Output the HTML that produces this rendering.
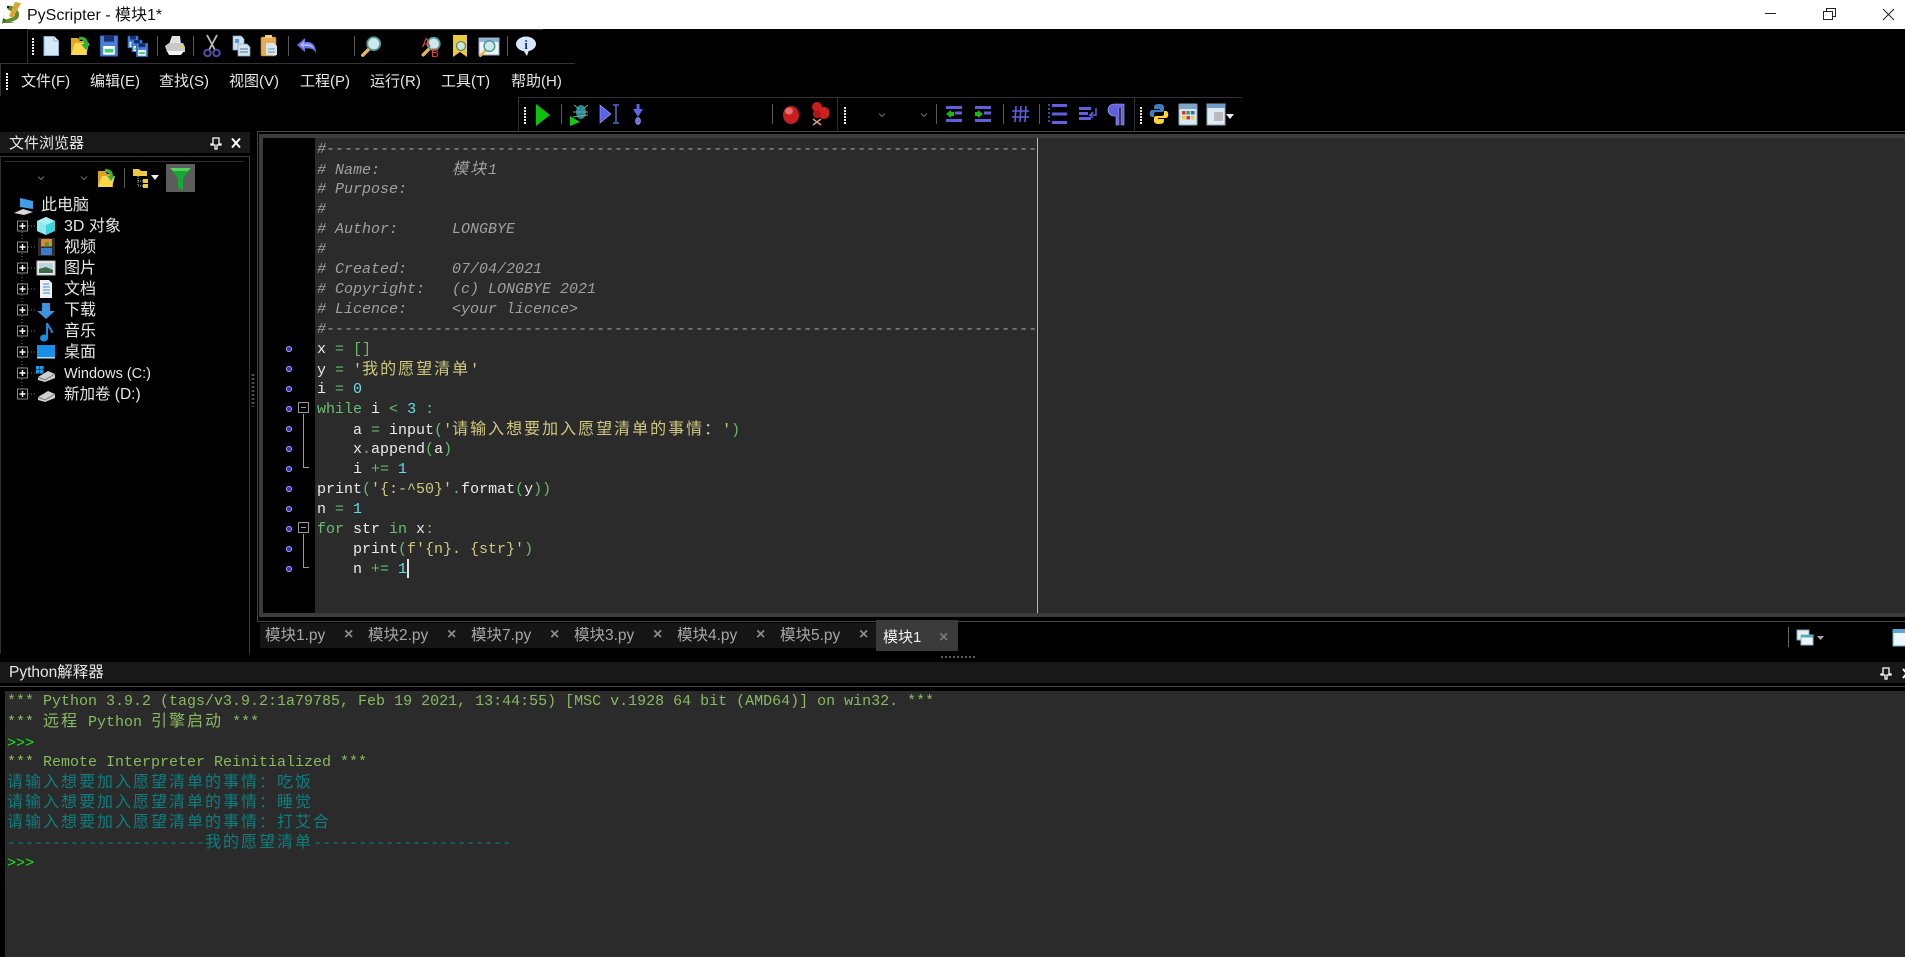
<!DOCTYPE html>
<html><head><meta charset="utf-8"><title>PyScripter</title>
<style>
html,body{margin:0;padding:0;background:#000;width:1905px;height:957px;overflow:hidden}
#r{position:relative;width:1905px;height:957px;background:#000;overflow:hidden;font-family:"Liberation Sans","Noto Sans CJK SC",sans-serif}
.a{position:absolute}
.t{position:absolute;white-space:pre;color:#e6e6e6;font-size:15px;line-height:20px;height:20px}
.tr{font-size:16px}
.l{position:absolute;left:317px;white-space:pre;font-family:"Liberation Mono","Noto Sans CJK SC",monospace;font-size:15px;line-height:20px;height:20px;color:#eaeaea}
.k{left:7px}
.c{font-size:16px;letter-spacing:2px}
.m{font-style:italic;color:#a0a0a0}
.g{color:#68bd72}.s{color:#d0c97f}.n{color:#62dfe6}.o{color:#66bb6a}
.f{color:#86bb5e}.p{color:#19e619}.e{color:#0b7f80}
.tb{color:#a6a6a6;font-size:15.5px;top:626px}
.x{color:#8a8a8a;font-size:16px;top:625px;font-weight:bold;font-family:"Liberation Sans",sans-serif}
</style></head><body><div id="r">

<div class="a" style="left:0;top:0;width:1905px;height:29px;background:#fff"></div>
<div class="t" style="left:27px;top:6px;color:#111;font-size:16px">PyScripter - 模块1*</div>

<!-- chrome lines -->
<div class="a" style="left:27px;top:29px;width:516px;height:1px;background:#333"></div>
<div class="a" style="left:27px;top:29px;width:1px;height:34px;background:#333"></div>
<div class="a" style="left:0;top:63px;width:575px;height:1px;background:#333"></div>
<div class="a" style="left:0;top:64px;width:1px;height:32px;background:#333"></div>
<div class="a" style="left:518px;top:97px;width:724px;height:1px;background:#333"></div>
<div class="a" style="left:518px;top:97px;width:1px;height:33px;background:#333"></div>
<div class="a" style="left:837px;top:97px;width:1px;height:33px;background:#333"></div>
<div class="a" style="left:1134px;top:97px;width:1px;height:33px;background:#333"></div>
<div class="a" style="left:257px;top:131px;width:1648px;height:1px;background:#4a4a4a"></div>

<!-- menu -->
<div class="t" style="left:21px;top:72px">文件(F)</div>
<div class="t" style="left:90px;top:72px">编辑(E)</div>
<div class="t" style="left:159px;top:72px">查找(S)</div>
<div class="t" style="left:229px;top:72px">视图(V)</div>
<div class="t" style="left:300px;top:72px">工程(P)</div>
<div class="t" style="left:370px;top:72px">运行(R)</div>
<div class="t" style="left:441px;top:72px">工具(T)</div>
<div class="t" style="left:511px;top:72px">帮助(H)</div>

<!-- file browser panel -->
<div class="a" style="left:0;top:132px;width:250px;height:21px;background:#181818"></div>
<div class="t" style="left:9px;top:134px">文件浏览器</div>
<div class="a" style="left:0;top:156px;width:250px;height:1px;background:#3a3a3a"></div>
<div class="a" style="left:0;top:156px;width:1px;height:498px;background:#2e2e2e"></div>
<div class="a" style="left:249px;top:156px;width:1px;height:498px;background:#3a3a3a"></div>
<div class="a" style="left:5px;top:161px;width:239px;height:1px;background:#2e2e2e"></div>
<div class="a" style="left:166px;top:164px;width:29px;height:28px;background:#5c5c5c"></div>

<div class="t tr" style="left:41px;top:196px">此电脑</div>
<div class="t tr" style="left:64px;top:217px">3D 对象</div>
<div class="t tr" style="left:64px;top:238px">视频</div>
<div class="t tr" style="left:64px;top:259px">图片</div>
<div class="t tr" style="left:64px;top:280px">文档</div>
<div class="t tr" style="left:64px;top:301px">下载</div>
<div class="t tr" style="left:64px;top:322px">音乐</div>
<div class="t tr" style="left:64px;top:343px">桌面</div>
<div class="t" style="left:64px;top:364px;font-size:14.5px">Windows (C:)</div>
<div class="t" style="left:64px;top:385px;font-size:15.5px">新加卷 (D:)</div>

<!-- editor frame -->
<div class="a" style="left:257px;top:132px;width:1648px;height:490px;background:#000;border-left:1px solid #454545;border-bottom:1px solid #454545;box-sizing:border-box"></div>
<div class="a" style="left:259px;top:134px;width:1646px;height:483px;background:#3c3c3c"></div>
<div class="a" style="left:263px;top:138px;width:1642px;height:475px;background:#2b2b2b"></div>
<div class="a" style="left:263px;top:138px;width:52px;height:475px;background:#000"></div>
<div class="a" style="left:1037px;top:138px;width:1px;height:475px;background:#b8b8b8"></div>
<div class="a" style="left:407px;top:559px;width:2px;height:19px;background:#e0e0e0"></div>

<!-- code -->
<div class="l m" style="top:140px">#-------------------------------------------------------------------------------</div>
<div class="l m" style="top:160px"># Name:        <span class="c">模块</span>1</div>
<div class="l m" style="top:180px"># Purpose:</div>
<div class="l m" style="top:200px">#</div>
<div class="l m" style="top:220px"># Author:      LONGBYE</div>
<div class="l m" style="top:240px">#</div>
<div class="l m" style="top:260px"># Created:     07/04/2021</div>
<div class="l m" style="top:280px"># Copyright:   (c) LONGBYE 2021</div>
<div class="l m" style="top:300px"># Licence:     &lt;your licence&gt;</div>
<div class="l m" style="top:320px">#-------------------------------------------------------------------------------</div>
<div class="l" style="top:340px">x <span class="o">= []</span></div>
<div class="l" style="top:360px">y <span class="o">=</span> <span class="s">'<span class="c">我的愿望清单</span>'</span></div>
<div class="l" style="top:380px">i <span class="o">=</span> <span class="n">0</span></div>
<div class="l" style="top:400px"><span class="g">while</span> i <span class="o">&lt;</span> <span class="n">3</span> <span class="o">:</span></div>
<div class="l" style="top:420px">    a <span class="o">=</span> input<span class="o">(</span><span class="s">'<span class="c">请输入想要加入愿望清单的事情：</span>'</span><span class="o">)</span></div>
<div class="l" style="top:440px">    x<span class="o">.</span>append<span class="o">(</span>a<span class="o">)</span></div>
<div class="l" style="top:460px">    i <span class="o">+=</span> <span class="n">1</span></div>
<div class="l" style="top:480px">print<span class="o">(</span><span class="s">'{:-^50}'</span><span class="o">.</span>format<span class="o">(</span>y<span class="o">))</span></div>
<div class="l" style="top:500px">n <span class="o">=</span> <span class="n">1</span></div>
<div class="l" style="top:520px"><span class="g">for</span> str <span class="g">in</span> x<span class="o">:</span></div>
<div class="l" style="top:540px">    print<span class="o">(</span><span class="s">f'{n}. {str}'</span><span class="o">)</span></div>
<div class="l" style="top:560px">    n <span class="o">+=</span> <span class="n">1</span></div>

<!-- tabs -->
<div class="a" style="left:260px;top:623px;width:616px;height:25px;background:#151515"></div>
<div class="a" style="left:876px;top:620px;width:82px;height:31px;background:#3a3a3a"></div>
<div class="t tb" style="left:265px">模块1.py</div><div class="t x" style="left:344px">×</div>
<div class="t tb" style="left:368px">模块2.py</div><div class="t x" style="left:447px">×</div>
<div class="t tb" style="left:471px">模块7.py</div><div class="t x" style="left:550px">×</div>
<div class="t tb" style="left:574px">模块3.py</div><div class="t x" style="left:653px">×</div>
<div class="t tb" style="left:677px">模块4.py</div><div class="t x" style="left:756px">×</div>
<div class="t tb" style="left:780px">模块5.py</div><div class="t x" style="left:859px">×</div>
<div class="t" style="left:883px;top:628px;font-size:15px;color:#f0f0f0">模块1</div>
<div class="t x" style="left:939px;top:628px;color:#777">×</div>
<div class="a" style="left:1788px;top:627px;width:1px;height:20px;background:#666"></div>

<!-- interpreter -->
<div class="a" style="left:0;top:662px;width:1905px;height:21px;background:#181818"></div>
<div class="t" style="left:9px;top:663px;font-size:15.5px">Python解释器</div>
<div class="a" style="left:0;top:686px;width:1905px;height:1px;background:#454545"></div>
<div class="a" style="left:5px;top:691px;width:1900px;height:266px;background:#2b2b2b"></div>
<div class="l k f" style="top:692px">*** Python 3.9.2 (tags/v3.9.2:1a79785, Feb 19 2021, 13:44:55) [MSC v.1928 64 bit (AMD64)] on win32. ***</div>
<div class="l k f" style="top:712px">*** <span class="c">远程</span> Python <span class="c">引擎启动</span> ***</div>
<div class="l k p" style="top:734px">&gt;&gt;&gt;</div>
<div class="l k f" style="top:753px">*** Remote Interpreter Reinitialized ***</div>
<div class="l k e" style="top:773px"><span class="c">请输入想要加入愿望清单的事情：吃饭</span></div>
<div class="l k e" style="top:793px"><span class="c">请输入想要加入愿望清单的事情：睡觉</span></div>
<div class="l k e" style="top:813px"><span class="c">请输入想要加入愿望清单的事情：打艾合</span></div>
<div class="l k e" style="top:833px">----------------------<span class="c">我的愿望清单</span>----------------------</div>
<div class="l k p" style="top:854px">&gt;&gt;&gt;</div>

<!-- icons -->
<svg class="a" style="left:0;top:0" width="1905" height="957" viewBox="0 0 1905 957">
<defs>
<g id="grip" fill="#eee"><rect x="-1" y="-8" width="2" height="2"/><rect x="-1" y="-5" width="2" height="2"/><rect x="-1" y="-2" width="2" height="2"/><rect x="-1" y="1" width="2" height="2"/><rect x="-1" y="4" width="2" height="2"/><rect x="-1" y="7" width="2" height="2"/></g>
<g id="plus"><rect x="-5" y="-5" width="10" height="10" fill="#000" stroke="#8a8a8a"/><path d="M-3 0H3M0-3V3" stroke="#fff" stroke-width="1.4"/></g>
<g id="dot"><circle r="2.6" fill="#3535c0" stroke="#9a9ad8" stroke-width="1"/></g>
<g id="sep"><rect x="0" y="-10" width="1" height="20" fill="#5a5a5a"/></g>
<g id="mag"><path d="M-3 3L-8 8" stroke="#e9b85b" stroke-width="3" stroke-linecap="round"/><circle cx="1.5" cy="-2" r="5.6" fill="#cfe8ea" stroke="#4f9a9a" stroke-width="1.6"/></g>
<g id="chev"><path d="M-3-1.5L0 1.5L3-1.5" fill="none" stroke="#6e6e6e"/></g>
<g id="disk"><rect x="-6" y="-7" width="12" height="14" fill="#4a80dc" stroke="#2b5ca8" stroke-width=".6"/><rect x="-3.5" y="-7" width="7" height="4" fill="#16306a"/><rect x="-4" y="0" width="8" height="6" fill="#fff"/><rect x="-3" y="2" width="6" height="2.5" fill="#3fd06a"/></g>
<g id="lines" fill="#5f5fe0"><rect x="-8" y="-8" width="16" height="3"/><rect x="-8" y="-1.5" width="16" height="3"/><rect x="-8" y="5" width="16" height="3"/></g>
</defs>

<!-- title logo -->
<g transform="translate(12,14)"><path d="M-9 9C-6 3 3 5 3 0L-1-3C-4-4-6-6-4-8C0-9 5-6 7-1C8 5 3 7-2 8L4 9Z" fill="#5f8c2c"/><path d="M3-12L9-11L1 4L-3 2Z" fill="#d9a632"/><circle cx="-4" cy="-7" r="1.2" fill="#222"/><path d="M-9 4L-5 6L-10 10Z" fill="#3f6d1e"/></g>

<!-- window controls -->
<path d="M1765 13.5H1776" stroke="#222" stroke-width="1"/>
<path d="M1823.5 11.5h9v8h-9zM1826.5 11.5v-3h9v8h-3" fill="none" stroke="#222"/>
<path d="M1883 9L1894 20M1894 9L1883 20" stroke="#222" stroke-width="1"/>

<!-- toolbar 1 -->
<use href="#grip" x="33" y="46"/>
<g transform="translate(51,46)"><path d="M-7-9.5H3L7.5-5V9.5H-7Z" fill="#d5e8f7" stroke="#88b4d4"/><path d="M3-9.5V-5H7.5" fill="#fff" stroke="#88b4d4"/></g>
<g transform="translate(80,46)"><path d="M-9 9V-8H-2L0-5H6L7 9Z" fill="#e4a924"/><path d="M-9 9L-5-3H9L6 9Z" fill="#fbd94e"/><path d="M-1-9C5-10 8-7 8-2L10-2L6 4L1-2H4C4-5 2-7-1-6Z" fill="#2eae3a"/></g>
<use href="#disk" transform="translate(109,46) scale(1.45)"/>
<use href="#disk" transform="translate(133,42) scale(.85)"/><use href="#disk" transform="translate(137,46) scale(.85)"/><use href="#disk" transform="translate(142,50) scale(.95)"/>
<use href="#sep" x="157" y="46"/>
<g transform="translate(175,46)"><path d="M-6-2L-3-10H5L6-2Z" fill="#e2e2e2"/><path d="M-10 0L-6-3H8L10 1V6H-8Z" fill="#c9c9c9"/><path d="M-8 5H9L6 9H-6Z" fill="#f3f3f3"/><rect x="5" y="0" width="3" height="2" fill="#e7d24a"/></g>
<use href="#sep" x="193" y="46"/>
<g transform="translate(212,46)" fill="none"><path d="M-5-11L3 4M5-11L-3 4" stroke="#bdbdbd" stroke-width="1.8"/><circle cx="-4.5" cy="7" r="3.2" stroke="#4f4fa8" stroke-width="2"/><circle cx="4.5" cy="7" r="3.2" stroke="#4f4fa8" stroke-width="2"/></g>
<g transform="translate(241,46)"><path d="M-8-10H0L3-7V4H-8Z" fill="#cfe2f2" stroke="#86a7c4" stroke-width=".7"/><path d="M-3-2H6L9 1V10H-3Z" fill="#d4e4ef" stroke="#86a7c4" stroke-width=".7"/><path d="M-1 3H7M-1 6H7" stroke="#6c8aa3" stroke-width="1.2"/><rect x="-6" y="-7" width="4" height="4" fill="#5b9ad1"/></g>
<g transform="translate(269,46)"><rect x="-8" y="-9" width="15" height="19" rx="1.5" fill="#e8ac50" stroke="#b98232" stroke-width=".6"/><rect x="-4" y="-11" width="7" height="3" fill="#f2d08f"/><path d="M-3-3H5L8 0V9H-3Z" fill="#d6e6f1"/><path d="M-1 3H6M-1 6H6" stroke="#7391a8" stroke-width="1.1"/></g>
<use href="#sep" x="288" y="46"/>
<g transform="translate(307,46)"><path d="M-10-1L-2-8V-4C4-5 9-2 9 7C7 3 4 2-2 2.500V6Z" fill="#6a74e4"/><path d="M-7-1L-3-5V-2C3-3 6-1 7 3C4 0 0 0-3 0V2Z" fill="#aab0f5"/></g>
<use href="#sep" x="354" y="46"/>
<use href="#mag" transform="translate(372,46) scale(1.15)"/>
<g transform="translate(431,46)"><use href="#mag" transform="translate(1,0) scale(1.1)"/><text x="-9" y="1" font-size="13" fill="#e6432a" font-family="Liberation Sans">A</text><text x="0" y="11" font-size="12" fill="#e6432a" font-family="Liberation Sans">B</text></g>
<g transform="translate(460,46)"><path d="M-7-11H7V11L0 6L-7 11Z" fill="#efc93d"/><circle cx="1" cy="0" r="4.500" fill="#cde5d8" stroke="#4f8f7a" stroke-width="1.300"/></g>
<g transform="translate(489,46)"><rect x="-10" y="-8" width="20" height="17" fill="#eef4fa" stroke="#9ab"/><rect x="-10" y="-8" width="20" height="4" fill="#8fb4d8"/><use href="#mag" transform="translate(-1,2) scale(.95)"/></g>
<use href="#sep" x="507" y="46"/>
<g transform="translate(526,45)"><ellipse cx="0" cy="-1" rx="10" ry="7.500" fill="#d8e6f7"/><path d="M-3 5L1 11L3 5Z" fill="#d8e6f7"/><text x="0" y="4" text-anchor="middle" font-size="13" font-weight="bold" fill="#2730a8" font-family="Liberation Serif">i</text></g>

<!-- menu grip -->
<use href="#grip" x="7" y="81"/>

<!-- toolbar 3 -->
<g transform="translate(0,1)">
<use href="#grip" x="525" y="114"/>
<path d="M536 103L550 114L536 125Z" fill="#10c010"/>
<use href="#sep" x="561" y="113"/>
<g transform="translate(579,113)"><ellipse cx="2" cy="-2" rx="5" ry="7" fill="#1a8f95"/><path d="M-5-9L0-5M9-9L4-5M-6-2H9M-6 3L9 1" stroke="#9a9a9a" fill="none"/><path d="M-9 2L1 8L-9 12Z" fill="#14c814"/></g>
<g transform="translate(608,113)"><path d="M-8-9L3 0L-8 9Z" fill="#5a62e6" stroke="#a0a6f5" stroke-width=".6"/><path d="M5-9H11M8-9V9M5 9H11" stroke="#4e6ad0" stroke-width="1.500"/></g>
<g transform="translate(638,113)"><path d="M-1.500-10H1.500V-5H5L0 3L-5-5H-1.500Z" fill="#5c64e4"/><ellipse cx="0" cy="7" rx="2.500" ry="3.500" fill="#6c74e8" stroke="#a6abf0" stroke-width=".6"/></g>
<use href="#sep" x="772" y="113"/>
<ellipse cx="791" cy="114" rx="8" ry="9" fill="#c81e1e"/><ellipse cx="789" cy="110" rx="4" ry="3.500" fill="#e07070"/>
<g transform="translate(820,113)"><ellipse cx="-3" cy="-7" rx="5" ry="5" fill="#c81e1e"/><ellipse cx="4" cy="-1" rx="5.500" ry="6" fill="#cf2020"/><ellipse cx="-3" cy="0" rx="4" ry="4" fill="#b01818"/><path d="M-7 5L1 11M1 5L-7 11" stroke="#d89a7a" stroke-width="1.500"/></g>
<use href="#grip" x="845" y="114"/>
<use href="#chev" x="882" y="114"/><use href="#chev" x="924" y="114"/>
<use href="#sep" x="936" y="113"/>
<g transform="translate(954,113)"><use href="#lines"/><rect x="-8" y="-3" width="16" height="5" fill="#000"/><path d="M-8 0L-3-4V-2H0V2H-3V4Z" fill="#1cb51c"/><rect x="1" y="-2.500" width="7" height="3" fill="#5f5fe0"/></g>
<g transform="translate(983,113)"><use href="#lines"/><rect x="-8" y="-3" width="16" height="5" fill="#000"/><path d="M0 0L-5-4V-2H-8V2H-5V4Z" fill="#1cb51c"/><rect x="1" y="-2.500" width="7" height="3" fill="#5f5fe0"/></g>
<use href="#sep" x="1003" y="113"/>
<path d="M1016 105L1015 121M1021 105L1020 121M1026 105L1025 121M1012 110H1029M1012 116H1029" stroke="#5f5fe0" stroke-width="1.600" fill="none"/>
<use href="#sep" x="1039" y="113"/>
<g transform="translate(1058,113)"><rect x="-6" y="-10" width="15" height="3" fill="#5f5fe0"/><rect x="-6" y="-1.500" width="15" height="3" fill="#5f5fe0"/><rect x="-6" y="7" width="15" height="3" fill="#5f5fe0"/><path d="M-9-10v20" stroke="#5f5fe0" stroke-dasharray="2 2" stroke-width="1.500"/></g>
<g transform="translate(1087,113)"><rect x="-8" y="-7" width="12" height="3" fill="#5f5fe0"/><rect x="-8" y="-2" width="9" height="3" fill="#5f5fe0"/><rect x="-8" y="3" width="12" height="3" fill="#5f5fe0"/><path d="M9-6V1H3L6-2M3 1L6 4" stroke="#5f5fe0" fill="none" stroke-width="1.500"/></g>
<g transform="translate(1116,113)"><path d="M8-10H-2A6 6 0 0 0-2 2H0V11H3V-7H5V11H8V-10Z" fill="#5f5fe0" stroke="#b0b4f2" stroke-width=".6"/></g>
<use href="#grip" x="1141" y="114"/>
<g transform="translate(1159,113)"><path d="M0-10C-5-10-5-8-5-5H1V-4H-7C-10-4-10 3-7 3H-5V0C-5-2-3-2-1-2H3C5-2 5-4 5-5V-7C5-9 3-10 0-10Z" fill="#3f7fc0"/><path d="M0 10C5 10 5 8 5 5H-1V4H7C10 4 10-3 7-3H5V0C5 2 3 2 1 2H-3C-5 2-5 4-5 5V7C-5 9-3 10 0 10Z" fill="#ffd43b"/></g>
<g transform="translate(1188,113)"><rect x="-9" y="-10" width="18" height="21" rx="1" fill="#d9e6f3" stroke="#8aa"/><rect x="-9" y="-10" width="18" height="5" fill="#7ea6cc"/><rect x="-6" y="-3" width="3.500" height="3.500" fill="#d33"/><rect x="-1.500" y="-3" width="3.500" height="3.500" fill="#3a3"/><rect x="3" y="-3" width="3.500" height="3.500" fill="#36c"/><rect x="-6" y="2" width="3.500" height="3.500" fill="#ec3"/><rect x="-1.500" y="2" width="3.500" height="3.500" fill="#d33"/><rect x="3" y="2" width="3.500" height="3.500" fill="#ec3"/></g>
<g transform="translate(1216,113)"><rect x="-9" y="-10" width="18" height="21" fill="#dfeaf4" stroke="#8aa"/><rect x="-9" y="-10" width="18" height="4" fill="#6f9cc8"/><rect x="-2" y="-2" width="9" height="9" fill="#bbb"/></g>
<path d="M1226 113H1234L1230 118Z" fill="#eee"/>
</g>

<!-- file browser header icons -->
<g transform="translate(216,143)"><path d="M-3-5H3V1H5V2H1V6H-1V2H-5V1H-3Z" fill="none" stroke="#fff" stroke-width="1.300"/></g>
<path d="M232 138.500L240 147.500M240 138.500L232 147.500" stroke="#fff" stroke-width="2"/>

<!-- file browser toolbar -->
<use href="#chev" x="41" y="178"/><use href="#chev" x="84" y="178"/>
<g transform="translate(106,178)"><path d="M-8 9V-7H-1L1-4H6L7 9Z" fill="#d9a324"/><path d="M-8 9L-4-2H9L6 9Z" fill="#f9d84a"/><path d="M-1-9C5-9 7-6 7-2L9-2L5 3L1-2H4C4-4 2-6-1-6Z" fill="#3db53d"/></g>
<rect x="124" y="168" width="1" height="20" fill="#5a5a5a"/>
<g transform="translate(141,178)"><path d="M-8-9H-2L0-7H6V-2H-8Z" fill="#efc93d"/><path d="M-3-2V8M-3 3H2M-3 8H2" stroke="#bbb" stroke-dasharray="1 1" fill="none"/><rect x="2" y="1" width="5" height="4" fill="#efc93d"/><rect x="2" y="6" width="5" height="4" fill="#efc93d"/></g>
<path d="M151 175H159L155 180Z" fill="#eee"/>
<path d="M170 168H191L183 178V190L178 188V178Z" fill="#14a836"/><path d="M170 168H191L188 171H173Z" fill="#55d05a"/>

<!-- tree -->
<path d="M22 226V394" stroke="#777" stroke-dasharray="1 2" fill="none"/>
<path d="M22 226H37M22 247H37M22 268H37M22 289H37M22 310H37M22 331H37M22 352H37M22 373H37M22 394H37" stroke="#777" stroke-dasharray="1 2" fill="none"/>
<use href="#plus" x="22.500" y="226"/><use href="#plus" x="22.500" y="247"/><use href="#plus" x="22.500" y="268"/><use href="#plus" x="22.500" y="289"/><use href="#plus" x="22.500" y="310"/><use href="#plus" x="22.500" y="331"/><use href="#plus" x="22.500" y="352"/><use href="#plus" x="22.500" y="373"/><use href="#plus" x="22.500" y="394"/>

<g transform="translate(24,206)"><path d="M-4-8L9-5V3L-4 1Z" fill="#3f9fe6"/><path d="M-10 7L-1 3L9 6L0 9Z" fill="#d8d8d8"/></g>
<g transform="translate(46,226)"><path d="M0-9L9-5V5L0 9L-9 5V-5Z" fill="#3fd4dc"/><path d="M0-9L9-5L0-1L-9-5Z" fill="#a8f0f2"/><path d="M0-1V9L-9 5V-5Z" fill="#8fe8ec"/></g>
<g transform="translate(46,247)"><rect x="-8" y="-9" width="17" height="18" fill="#2c2c2c"/><rect x="-5" y="-8" width="11" height="7.500" fill="#d98a2b"/><rect x="-5" y="1" width="11" height="7" fill="#3a7ad0"/><rect x="-1" y="-5" width="4" height="4" fill="#4c9a3c"/></g>
<g transform="translate(46,268)"><rect x="-9" y="-7" width="18" height="14" fill="#eee" stroke="#bbb"/><rect x="-7" y="-5" width="14" height="10" fill="#bcd3dd"/><path d="M-7 5L-7 1L0-1L7 2V5Z" fill="#3b6a4a"/></g>
<g transform="translate(46,289)"><path d="M-6-9H3L6-6V9H-6Z" fill="#f0f0f0"/><path d="M-3-5H3M-3-2H4M-3 1H4M-3 4H4" stroke="#2b8fd8" stroke-width="1"/></g>
<path d="M42 303H50V311H55L46 319L37 311H42Z" fill="#3f92e0"/>
<g><ellipse cx="44" cy="338" rx="4" ry="3.500" fill="#1a8fe0"/><path d="M47 338V323C48 327 52 329 52 333" stroke="#1a8fe0" stroke-width="2" fill="none"/></g>
<g transform="translate(46,352)"><rect x="-9" y="-7" width="18" height="13" fill="#1a8fe8"/><rect x="-9" y="5" width="18" height="1.500" fill="#bcdcf5"/></g>
<g transform="translate(46,373)"><rect x="-10" y="-7" width="3.500" height="3.500" fill="#1aa0f0"/><rect x="-6" y="-7" width="3.500" height="3.500" fill="#1aa0f0"/><rect x="-10" y="-3" width="3.500" height="3.500" fill="#1aa0f0"/><rect x="-6" y="-3" width="3.500" height="3.500" fill="#1aa0f0"/><path d="M-8 4L2-2L9 1V5L-1 9L-8 7Z" fill="#cfcfcf"/><path d="M-8 4L-1 7L9 1" stroke="#777" fill="none"/></g>
<g transform="translate(46,394)"><path d="M-8 3L2-3L9 0V4L-1 8L-8 6Z" fill="#d0d0d0"/><path d="M-8 3L-1 6L9 0" stroke="#777" fill="none"/></g>

<!-- splitters -->
<path d="M253 374V407" stroke="#4a4a4a" stroke-width="3" stroke-dasharray="2 2"/>
<path d="M941 657H975" stroke="#5a5a5a" stroke-width="2" stroke-dasharray="2 2"/>

<!-- gutter -->
<use href="#dot" x="289" y="349"/><use href="#dot" x="289" y="369"/><use href="#dot" x="289" y="389"/><use href="#dot" x="289" y="409"/><use href="#dot" x="289" y="429"/><use href="#dot" x="289" y="449"/><use href="#dot" x="289" y="469"/><use href="#dot" x="289" y="489"/><use href="#dot" x="289" y="509"/><use href="#dot" x="289" y="529"/><use href="#dot" x="289" y="549"/><use href="#dot" x="289" y="569"/>
<g fill="none" stroke="#9a9a9a"><path d="M303.500 414V467.500H309"/><rect x="298.500" y="402.500" width="10" height="10"/><path d="M301 407.500H306"/><path d="M303.500 534V567.500H309"/><rect x="298.500" y="522.500" width="10" height="10"/><path d="M301 527.500H306"/></g>

<!-- tab strip right icons -->
<g transform="translate(1803,637)"><rect x="-6" y="-7" width="12" height="10" fill="#eee" stroke="#6aa9c9"/><rect x="-2" y="-2" width="12" height="10" fill="#eef6fa" stroke="#7fc0cf"/><rect x="-2" y="-2" width="12" height="2.500" fill="#55a8c0"/></g>
<path d="M1817 636H1824L1820.500 640Z" fill="#aaa"/>
<g><rect x="1893" y="630" width="14" height="16" fill="#eef6fa" stroke="#5fb0c8"/><rect x="1893" y="629" width="14" height="4" fill="#5aa6d6"/></g>

<!-- interpreter header icons -->
<g transform="translate(1886,673)"><path d="M-3-5H3V1H5V2H1V6H-1V2H-5V1H-3Z" fill="none" stroke="#fff" stroke-width="1.300"/></g>
<path d="M1903 669L1911 678M1911 669L1903 678" stroke="#fff" stroke-width="2"/>
</svg>
</div></body></html>
